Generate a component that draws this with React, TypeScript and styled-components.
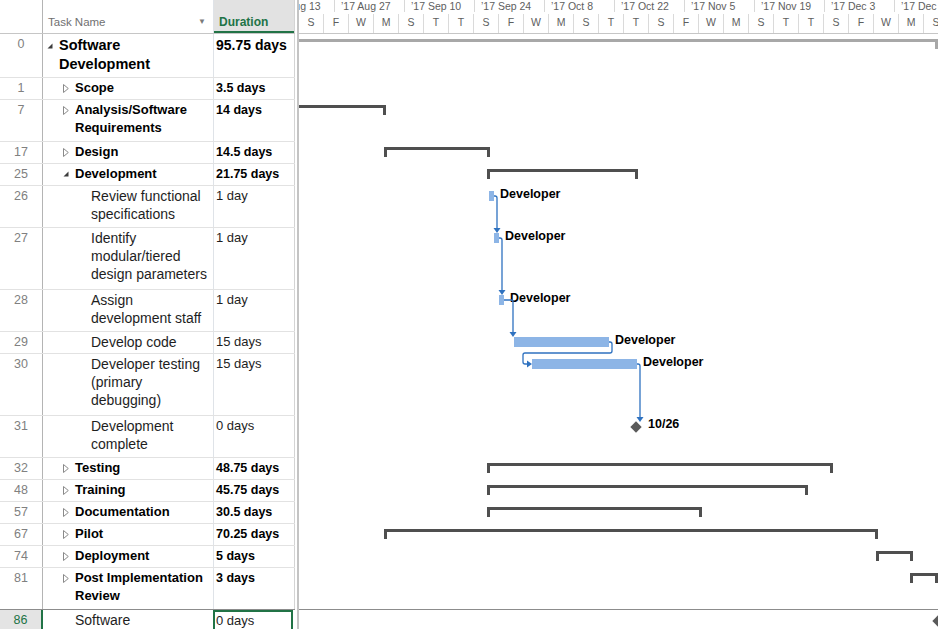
import React from "react";
import styled, { createGlobalStyle } from "styled-components";

const GlobalStyle = createGlobalStyle`
  html, body {
    margin: 0;
    padding: 0;
    background: #ffffff;
  }
  body {
    font-family: "Liberation Sans", Arial, sans-serif;
    overflow: hidden;
  }
  * { box-sizing: border-box; }
`;

const GREEN = "#217346";
const LINK = "#2f72c0";

type GanttItem =
  | { kind: "project"; x1: number; x2: number }
  | { kind: "summary"; x1: number; x2: number }
  | { kind: "task"; x1: number; x2: number; label: string }
  | { kind: "milestone"; x: number; label?: string };

interface Row {
  id: number;
  lines: string[];
  duration: string;
  level: number;
  bold: boolean;
  toggle?: "open" | "closed";
  height: number;
  selected?: boolean;
  gantt?: GanttItem;
}

const rows: Row[] = [
  { id: 0, lines: ["Software", "Development"], duration: "95.75 days", level: 0, bold: true, toggle: "open", height: 44, gantt: { kind: "project", x1: -60, x2: 639 } },
  { id: 1, lines: ["Scope"], duration: "3.5 days", level: 1, bold: true, toggle: "closed", height: 22 },
  { id: 7, lines: ["Analysis/Software", "Requirements"], duration: "14 days", level: 1, bold: true, toggle: "closed", height: 42, gantt: { kind: "summary", x1: -60, x2: 87 } },
  { id: 17, lines: ["Design"], duration: "14.5 days", level: 1, bold: true, toggle: "closed", height: 22, gantt: { kind: "summary", x1: 85, x2: 191 } },
  { id: 25, lines: ["Development"], duration: "21.75 days", level: 1, bold: true, toggle: "open", height: 22, gantt: { kind: "summary", x1: 188, x2: 339 } },
  { id: 26, lines: ["Review functional", "specifications"], duration: "1 day", level: 2, bold: false, height: 42, gantt: { kind: "task", x1: 190, x2: 195, label: "Developer" } },
  { id: 27, lines: ["Identify", "modular/tiered", "design parameters"], duration: "1 day", level: 2, bold: false, height: 62, gantt: { kind: "task", x1: 195, x2: 200, label: "Developer" } },
  { id: 28, lines: ["Assign", "development staff"], duration: "1 day", level: 2, bold: false, height: 42, gantt: { kind: "task", x1: 200, x2: 205, label: "Developer" } },
  { id: 29, lines: ["Develop code"], duration: "15 days", level: 2, bold: false, height: 22, gantt: { kind: "task", x1: 215, x2: 310, label: "Developer" } },
  { id: 30, lines: ["Developer testing", "(primary", "debugging)"], duration: "15 days", level: 2, bold: false, height: 62, gantt: { kind: "task", x1: 233, x2: 338, label: "Developer" } },
  { id: 31, lines: ["Development", "complete"], duration: "0 days", level: 2, bold: false, height: 42, gantt: { kind: "milestone", x: 337, label: "10/26" } },
  { id: 32, lines: ["Testing"], duration: "48.75 days", level: 1, bold: true, toggle: "closed", height: 22, gantt: { kind: "summary", x1: 188, x2: 534 } },
  { id: 48, lines: ["Training"], duration: "45.75 days", level: 1, bold: true, toggle: "closed", height: 22, gantt: { kind: "summary", x1: 188, x2: 509 } },
  { id: 57, lines: ["Documentation"], duration: "30.5 days", level: 1, bold: true, toggle: "closed", height: 22, gantt: { kind: "summary", x1: 188, x2: 403 } },
  { id: 67, lines: ["Pilot"], duration: "70.25 days", level: 1, bold: true, toggle: "closed", height: 22, gantt: { kind: "summary", x1: 85, x2: 579 } },
  { id: 74, lines: ["Deployment"], duration: "5 days", level: 1, bold: true, toggle: "closed", height: 22, gantt: { kind: "summary", x1: 577, x2: 614 } },
  { id: 81, lines: ["Post Implementation", "Review"], duration: "3 days", level: 1, bold: true, toggle: "closed", height: 42, gantt: { kind: "summary", x1: 611, x2: 639 } },
  { id: 86, lines: ["Software"], duration: "0 days", level: 1, bold: false, height: 30, selected: true, gantt: { kind: "milestone", x: 639 } },
];

const majorLabels = [
  "’17 Aug 13", "’17 Aug 27", "’17 Sep 10", "’17 Sep 24", "’17 Oct 8",
  "’17 Oct 22", "’17 Nov 5", "’17 Nov 19", "’17 Dec 3", "’17 Dec 17",
];
const dayLetters = ["S", "F", "W", "M", "S", "T", "T"];
const minorLetters = Array.from({ length: 27 }, (_, i) => dayLetters[i % 7]);

/* ---------- layout ---------- */

const Screen = styled.div`
  width: 938px;
  height: 629px;
  display: flex;
  overflow: hidden;
  background: #fff;
`;

/* ---------- task table ---------- */

const Table = styled.div`
  width: 295px;
  flex: none;
  display: flex;
  flex-direction: column;
`;

const HeaderRow = styled.div`
  flex: none;
  display: grid;
  grid-template-columns: 43px 171px 81px;
  height: 34px;
  border-bottom: 1px solid #c6c6c6;
`;

const HeaderId = styled.div`
  border-right: 1px solid #b4b4b4;
`;

const HeaderName = styled.div`
  display: flex;
  align-items: flex-end;
  justify-content: space-between;
  padding: 0 7px 5px 5px;
  font-size: 11.5px;
  color: #707070;
  border-right: 1px solid #dfe3e8;
`;

const DropCaret = styled.span`
  font-size: 8px;
  color: #7a7a7a;
  margin-bottom: 2px;
`;

const HeaderDuration = styled.div`
  display: flex;
  align-items: flex-end;
  padding: 0 0 4px 5px;
  background: #e2e2e2;
  color: ${GREEN};
  font-size: 12px;
  font-weight: bold;
  box-shadow: inset 0 -2px 0 ${GREEN};
  border-right: 1px solid #d4d4d4;
`;

const BodyRow = styled.div<{ $h: number; $selected?: boolean }>`
  flex: none;
  display: grid;
  grid-template-columns: 43px 171px 81px;
  height: ${(p) => p.$h}px;
  border-bottom: 1px solid #e2e2e2;
  ${(p) =>
    p.$selected &&
    `
    margin-top: -1px;
    border-top: 1px solid #8c8c8c;
    border-bottom: none;
  `}
`;

const IdCell = styled.div<{ $selected?: boolean }>`
  text-align: center;
  font-size: 12.5px;
  line-height: 18px;
  padding-top: 1px;
  color: ${(p) => (p.$selected ? GREEN : "#808080")};
  background: ${(p) => (p.$selected ? "#e4e4e4" : "transparent")};
  border-right: ${(p) => (p.$selected ? `2px solid ${GREEN}` : "1px solid #b4b4b4")};
`;

const NameCell = styled.div<{ $level: number; $top: boolean }>`
  display: flex;
  align-items: flex-start;
  padding-left: ${(p) => 4 + p.$level * 16}px;
  padding-top: ${(p) => (p.$top ? 2 : 1)}px;
  border-right: 1px solid #dfe3e8;
`;

const ToggleBox = styled.div<{ $top: boolean }>`
  width: 12px;
  flex: none;
  height: ${(p) => (p.$top ? 19 : 18)}px;
  display: flex;
  align-items: center;
`;

const NameText = styled.div<{ $bold: boolean; $top: boolean }>`
  font-size: ${(p) => (p.$top ? 14.5 : p.$bold ? 13 : 14)}px;
  line-height: ${(p) => (p.$top ? 19 : 18)}px;
  font-weight: ${(p) => (p.$bold ? "bold" : "normal")};
  color: ${(p) => (p.$bold ? "#000" : "#1e1e1e")};
  white-space: nowrap;
`;

const DurationCell = styled.div<{ $bold: boolean; $top: boolean; $selected?: boolean }>`
  padding: ${(p) => (p.$top ? 2 : 1)}px 0 0 2px;
  font-size: ${(p) => (p.$top ? 14 : p.$bold ? 12.5 : 13)}px;
  line-height: ${(p) => (p.$top ? 19 : 18)}px;
  font-weight: ${(p) => (p.$bold ? "bold" : "normal")};
  color: ${(p) => (p.$bold ? "#000" : "#1e1e1e")};
  white-space: nowrap;
  border-right: 1px solid #d4d4d4;
  ${(p) =>
    p.$selected &&
    `
    border: 2px solid ${GREEN};
    padding-left: 1px;
    padding-top: 0;
    margin-left: -1px;
    margin-right: 2px;
  `}
`;

const Divider = styled.div`
  width: 4px;
  flex: none;
  border-right: 2px solid #c4c4c4;
`;

/* ---------- gantt ---------- */

const Gantt = styled.div`
  flex: 1;
  min-width: 0;
  display: flex;
  flex-direction: column;
  overflow: hidden;
`;

const Timescale = styled.div`
  height: 34px;
  flex: none;
  border-bottom: 1px solid #c6c6c6;
  overflow: hidden;
  color: #5e5e5e;
  font-size: 10.5px;
`;

const MajorTier = styled.div<{ $offset: number }>`
  display: flex;
  height: 14px;
  margin-left: ${(p) => p.$offset}px;
`;

const MajorCell = styled.div`
  flex: none;
  width: 70px;
  padding-left: 6px;
  line-height: 13px;
  white-space: nowrap;
  border-left: 1px solid #d8d8d8;
  height: 12px;
`;

const MinorTier = styled.div`
  display: flex;
  height: 19px;
`;

const MinorCell = styled.div`
  flex: none;
  width: 25px;
  text-align: center;
  line-height: 17px;
  border-right: 1px solid #dadada;
`;

const ChartBody = styled.div`
  position: relative;
  flex: 1;
`;

const ChartRow = styled.div<{ $h: number; $selected?: boolean }>`
  position: relative;
  flex: none;
  height: ${(p) => p.$h}px;
  ${(p) =>
    p.$selected &&
    `
    margin-top: -1px;
    border-top: 1px solid #8c8c8c;
  `}
`;

const Bracket = styled.div<{ $tone: "dark" | "light" }>`
  position: absolute;
  top: 5px;
  height: 3px;
  background: ${(p) => (p.$tone === "dark" ? "#4f4f4f" : "#a8a8a8")};

  &::before,
  &::after {
    content: "";
    position: absolute;
    top: 0;
    width: 3px;
    height: 10px;
    background: inherit;
  }
  &::before {
    left: 0;
  }
  &::after {
    right: 0;
  }
`;

const TaskBar = styled.div`
  position: absolute;
  top: 5px;
  height: 10px;
  background: #8db5e6;
`;

const Diamond = styled.div`
  position: absolute;
  top: 7px;
  width: 8px;
  height: 8px;
  margin-left: -4px;
  background: #5a5a5a;
  transform: rotate(45deg);
`;

const BarLabel = styled.div`
  position: absolute;
  top: 1px;
  font-size: 12.5px;
  line-height: 14px;
  font-weight: bold;
  color: #000;
  white-space: nowrap;
`;

const Links = styled.svg`
  position: absolute;
  left: 0;
  top: 0;
  overflow: visible;
  pointer-events: none;
`;

/* ---------- parts ---------- */

function Toggle({ state }: { state: "open" | "closed" }) {
  if (state === "open") {
    return (
      <svg width="6" height="6" viewBox="0 0 6 6">
        <polygon points="5.5,0.5 5.5,5.5 0.5,5.5" fill="#3c3c3c" />
      </svg>
    );
  }
  return (
    <svg width="6" height="9" viewBox="0 0 6 9">
      <polygon points="0.5,0.5 5.3,4.5 0.5,8.5" fill="#fff" stroke="#8a8a8a" strokeWidth="1" />
    </svg>
  );
}

function GanttMark({ item }: { item: GanttItem }) {
  switch (item.kind) {
    case "project":
    case "summary":
      return (
        <Bracket
          $tone={item.kind === "project" ? "light" : "dark"}
          style={{ left: item.x1, width: item.x2 - item.x1 }}
        />
      );
    case "task":
      return (
        <>
          <TaskBar style={{ left: item.x1, width: item.x2 - item.x1 }} />
          <BarLabel style={{ left: item.x2 + 6 }}>{item.label}</BarLabel>
        </>
      );
    case "milestone":
      return (
        <>
          <Diamond style={{ left: item.x }} />
          {item.label && <BarLabel style={{ left: item.x + 12 }}>{item.label}</BarLabel>}
        </>
      );
  }
}

const linkPaths = [
  "M195 162 H196 Q198 162 198 164 V195",
  "M200 204 H201 Q203 204 203 206 V257",
  "M205 266 H212 Q214 266 214 268 V299",
  "M310 308 H311 Q313 308 313 310 V317 Q313 319 311 319 H226 Q224 319 224 321 V328 Q224 330 226 330 H229",
  "M338 330 H339 Q341 330 341 332 V384",
];

const downArrows: Array<[number, number]> = [
  [198, 199],
  [203, 261],
  [214, 303],
  [341, 388],
];

function LinkLayer() {
  return (
    <Links width="639" height="600">
      {linkPaths.map((d, i) => (
        <path key={i} d={d} fill="none" stroke={LINK} strokeWidth="1.3" />
      ))}
      {downArrows.map(([x, y], i) => (
        <polygon key={i} points={`${x - 3.5},${y - 5} ${x + 3.5},${y - 5} ${x},${y}`} fill={LINK} />
      ))}
      <polygon points="228,326.5 228,333.5 233,330" fill={LINK} />
    </Links>
  );
}

export default function App() {
  return (
    <>
      <GlobalStyle />
      <Screen>
        <Table>
          <HeaderRow>
            <HeaderId />
            <HeaderName>
              <span>Task Name</span>
              <DropCaret>▼</DropCaret>
            </HeaderName>
            <HeaderDuration>Duration</HeaderDuration>
          </HeaderRow>
          {rows.map((row) => {
            const top = row.level === 0;
            return (
              <BodyRow key={row.id} $h={row.height} $selected={row.selected}>
                <IdCell $selected={row.selected}>{row.id}</IdCell>
                <NameCell $level={row.level} $top={top}>
                  <ToggleBox $top={top}>{row.toggle && <Toggle state={row.toggle} />}</ToggleBox>
                  <div>
                    {row.lines.map((line) => (
                      <NameText key={line} $bold={row.bold} $top={top}>
                        {line}
                      </NameText>
                    ))}
                  </div>
                </NameCell>
                <DurationCell $bold={row.bold} $top={top} $selected={row.selected}>
                  {row.duration}
                </DurationCell>
              </BodyRow>
            );
          })}
        </Table>
        <Divider />
        <Gantt>
          <Timescale>
            <MajorTier $offset={-35}>
              {majorLabels.map((label) => (
                <MajorCell key={label}>{label}</MajorCell>
              ))}
            </MajorTier>
            <MinorTier>
              {minorLetters.map((letter, i) => (
                <MinorCell key={i}>{letter}</MinorCell>
              ))}
            </MinorTier>
          </Timescale>
          <ChartBody>
            {rows.map((row) => (
              <ChartRow key={row.id} $h={row.height} $selected={row.selected}>
                {row.gantt && <GanttMark item={row.gantt} />}
              </ChartRow>
            ))}
            <LinkLayer />
          </ChartBody>
        </Gantt>
      </Screen>
    </>
  );
}
